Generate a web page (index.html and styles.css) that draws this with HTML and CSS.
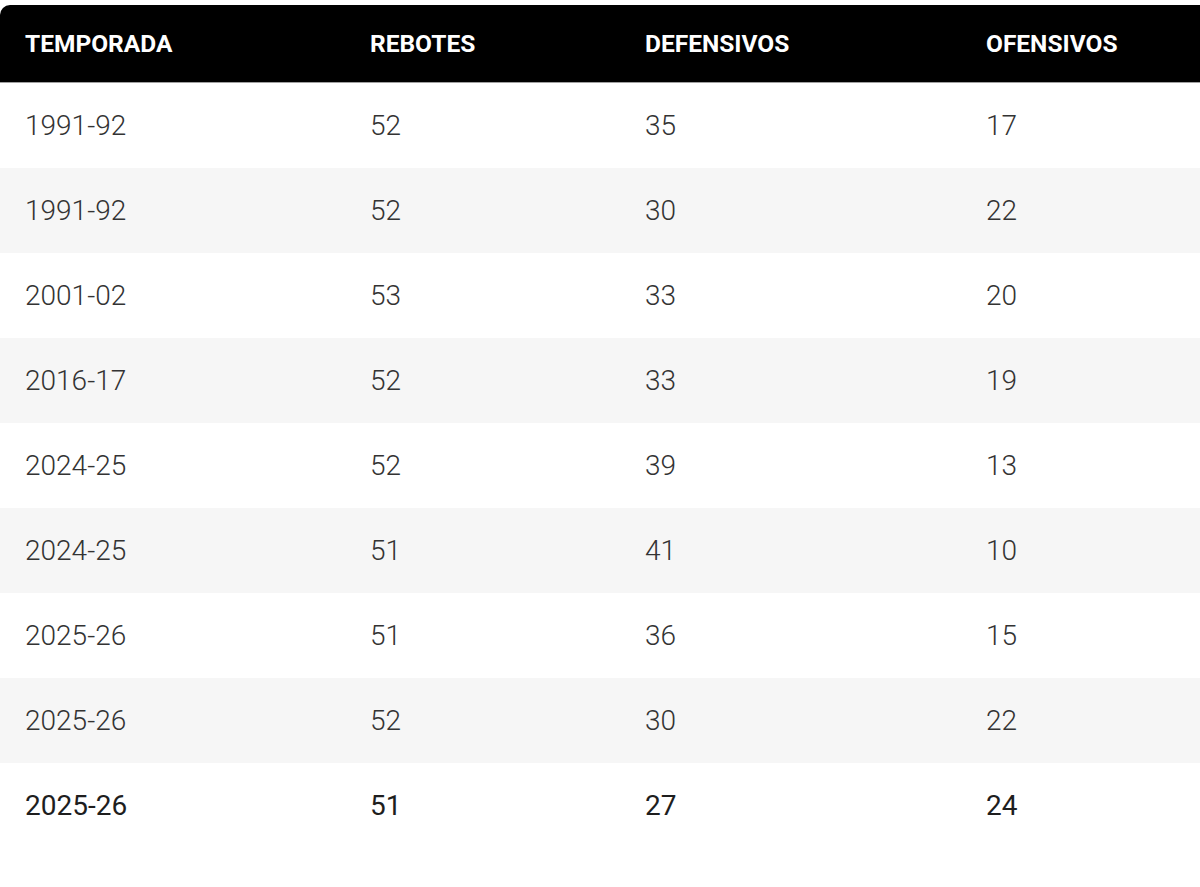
FILE: index.html
```html
<!DOCTYPE html>
<html lang="es">
<head>
<meta charset="utf-8">
<title>Rebotes</title>
<link rel="stylesheet" href="styles.css">
</head>
<body>
<div class="wrap">
<table class="stats">
<colgroup>
<col class="c1"><col class="c2"><col class="c3"><col class="c4">
</colgroup>
<thead>
<tr><th>TEMPORADA</th><th>REBOTES</th><th>DEFENSIVOS</th><th>OFENSIVOS</th></tr>
</thead>
<tbody>
<tr><td>1991-92</td><td>52</td><td>35</td><td>17</td></tr>
<tr><td>1991-92</td><td>52</td><td>30</td><td>22</td></tr>
<tr><td>2001-02</td><td>53</td><td>33</td><td>20</td></tr>
<tr><td>2016-17</td><td>52</td><td>33</td><td>19</td></tr>
<tr><td>2024-25</td><td>52</td><td>39</td><td>13</td></tr>
<tr><td>2024-25</td><td>51</td><td>41</td><td>10</td></tr>
<tr><td>2025-26</td><td>51</td><td>36</td><td>15</td></tr>
<tr><td>2025-26</td><td>52</td><td>30</td><td>22</td></tr>
<tr class="last"><td>2025-26</td><td>51</td><td>27</td><td>24</td></tr>
</tbody>
</table>
</div>
</body>
</html>
```
FILE: styles.css
```css
html, body {
  margin: 0;
  padding: 0;
  background: #fff;
}
.wrap {
  padding-top: 5px;
}
.stats {
  width: 1200px;
  border-collapse: separate;
  border-spacing: 0;
  table-layout: fixed;
  font-family: Roboto, "Liberation Sans", sans-serif;
}
.c1 { width: 345px; }
.c2 { width: 275px; }
.c3 { width: 341px; }
.c4 { width: 239px; }
.stats th {
  background: #000;
  color: #fff;
  font-weight: 700;
  font-size: 24.5px;
  letter-spacing: 0;
  text-align: left;
  height: 78px;
  padding: 0 0 0 25px;
  border-bottom: 1px solid #a0a0a0;
  box-sizing: border-box;
}
.stats th:first-child {
  border-top-left-radius: 10px;
}
.stats td {
  height: 85px;
  padding: 0 0 0 25px;
  font-size: 28px;
  font-weight: 300;
  color: #333;
  box-sizing: border-box;
}
.stats tbody tr:nth-child(even) td {
  background: #f6f6f6;
}
.stats tr.last td {
  font-weight: 400;
  color: #1e1e1e;
}
```
